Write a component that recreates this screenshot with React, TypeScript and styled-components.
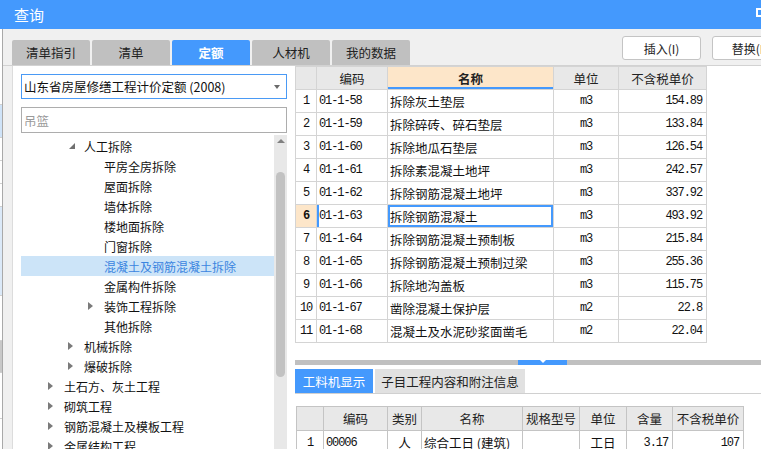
import React, {FC} from 'react';
import styled, {createGlobalStyle} from 'styled-components';

const BLUE = '#4499fd';

const GlobalStyle = createGlobalStyle`
  html, body { margin: 0; padding: 0; }
  body {
    font-family: "Noto Sans CJK SC", "Noto Sans", sans-serif;
    font-size: 12px;
    color: #111;
    background: #f0f0f0;
  }
  #root { width: 761px; height: 449px; overflow: hidden; }
`;

const Window = styled.div`
  width: 761px;
  height: 449px;
  display: flex;
  flex-direction: column;
  overflow: hidden;
`;

const TitleBar = styled.div`
  height: 29px;
  flex-shrink: 0;
  background: ${BLUE};
  color: #fff;
  font-size: 15px;
  display: flex;
  align-items: center;
  justify-content: space-between;
  padding-left: 14px;
`;

const MaxIcon = styled.span`
  width: 8px;
  height: 5px;
  border: 2px solid #fff;
  margin-right: -7px;
  margin-top: -4px;
`;

const Body = styled.div`
  flex: 1;
  display: flex;
  min-height: 0;
`;

const BehindStrip = styled.div`
  width: 2px;
  flex-shrink: 0;
  border-right: 1px solid #a9a9a9;
  display: flex;
  flex-direction: column;
  background: #fff;
`;

const BehindBlock = styled.div<{ $h: number; $c: string }>`
  height: ${({$h}) => $h}px;
  background: ${({$c}) => $c};
  border-bottom: 1px solid #d0d0d0;
`;

const Dialog = styled.div`
  flex: 1;
  display: flex;
  flex-direction: column;
  background: #f0f0f0;
  min-width: 0;
`;

const TopBar = styled.div`
  height: 36px;
  flex-shrink: 0;
  display: flex;
  align-items: flex-start;
  padding-left: 9px;
  overflow: hidden;
`;

const Tabs = styled.div`
  display: flex;
  gap: 2px;
  margin-top: 11px;
  flex-shrink: 0;
`;

const Tab = styled.div<{ $active?: boolean }>`
  width: 78px;
  height: 25px;
  border-radius: 2px 2px 0 0;
  background: ${({$active}) => ($active ? BLUE : '#c0c0c0')};
  color: ${({$active}) => ($active ? '#fff' : '#222')};
  font-weight: ${({$active}) => ($active ? 700 : 400)};
  font-size: 12.5px;
  display: flex;
  align-items: center;
  justify-content: center;
`;

const ButtonGroup = styled.div`
  display: flex;
  gap: 11px;
  margin-top: 7px;
  margin-left: 212px;
  flex-shrink: 0;
`;

const Button = styled.div`
  width: 79px;
  height: 24px;
  box-sizing: border-box;
  background: #fff;
  border: 1px solid #c4c4c4;
  border-radius: 3px;
  display: flex;
  align-items: center;
  justify-content: center;
  font-size: 12px;
  color: #222;
`;

const Content = styled.div`
  flex: 1;
  display: flex;
  min-height: 0;
  border-top: 1px solid #d2d2d2;
  padding-left: 9px;
`;

const LeftPanel = styled.div`
  width: 283px;
  flex-shrink: 0;
  box-sizing: border-box;
  background: #fff;
  border-left: 1px solid #dcdcdc;
  padding: 8px 0 0 8px;
  display: flex;
  flex-direction: column;
`;

const Select = styled.div`
  width: 266px;
  height: 25px;
  box-sizing: border-box;
  border: 1px solid #4a9af5;
  display: flex;
  align-items: center;
  justify-content: space-between;
  padding: 0 6px 0 2px;
  font-size: 12.5px;
`;

const Caret = styled.span`
  border-top: 4px solid #6a6a6a;
  border-left: 3.5px solid transparent;
  border-right: 3.5px solid transparent;
`;

const Search = styled.div`
  width: 266px;
  height: 26px;
  box-sizing: border-box;
  margin-top: 8px;
  border: 1px solid #adadad;
  display: flex;
  align-items: center;
  padding-left: 2px;
  color: #9a9a9a;
  font-size: 12.5px;
`;

const TreeWrap = styled.div`
  flex: 1;
  display: flex;
  margin-top: 2px;
  min-height: 0;
  overflow: hidden;
`;

const TreeList = styled.div`
  width: 253px;
  padding-top: 1px;
`;

const TreeRow = styled.div<{ $level: number; $selected?: boolean }>`
  height: 20px;
  display: flex;
  align-items: center;
  padding-left: ${({$level}) => 27 + $level * 20}px;
  background: ${({$selected}) => ($selected ? '#cce4f8' : 'transparent')};
  color: ${({$selected}) => ($selected ? '#3b85e0' : '#111')};
  white-space: nowrap;
`;

const Toggle = styled.span`
  width: 16px;
  height: 20px;
  display: flex;
  align-items: center;
  flex-shrink: 0;
`;

const Collapsed = styled.span`
  border-left: 5px solid #7a7a7a;
  border-top: 4px solid transparent;
  border-bottom: 4px solid transparent;
`;

const Expanded = styled.span`
  border-bottom: 6px solid #707070;
  border-left: 6px solid transparent;
  margin-left: 1px;
`;

const ScrollTrack = styled.div`
  width: 13px;
  background: #e8e8e8;
  display: flex;
  flex-direction: column;
  align-items: center;
`;

const ScrollArrow = styled.span`
  margin-top: 4px;
  border-bottom: 4px solid #808080;
  border-left: 4px solid transparent;
  border-right: 4px solid transparent;
`;

const Thumb = styled.div`
  width: 9px;
  height: 205px;
  margin-top: 29px;
  border-radius: 5px;
  background: #c2c2c2;
`;

const RightPanel = styled.div`
  flex: 1;
  min-width: 0;
  background: #fff;
  display: flex;
  flex-direction: column;
  overflow: hidden;
`;

const GridArea = styled.div`
  height: 294px;
  flex-shrink: 0;
`;

const Table = styled.table<{ $line: string }>`
  border-collapse: collapse;
  table-layout: fixed;
  td, th {
    border: 1px solid ${({$line}) => $line};
    padding: 0;
    overflow: hidden;
    white-space: nowrap;
  }
`;

const HeadCell = styled.th<{ $current?: boolean }>`
  background: ${({$current}) => ($current ? '#fde6c9' : '#e8e8e8')};
  font-weight: ${({$current}) => ($current ? 700 : 400)};
  font-size: 12.5px;
  color: #222;
  text-align: center;
  box-shadow: ${({$current}) => ($current ? `inset 0 -2px 0 ${BLUE}` : 'none')};
`;

const Cell = styled.td<{
  $align?: 'left' | 'center' | 'right';
  $mono?: boolean;
  $current?: boolean;
  $focus?: boolean;
  $edge?: boolean;
}>`
  text-align: ${({$align}) => $align || 'left'};
  font-family: ${({$mono}) => ($mono ? '"Liberation Mono", monospace' : '"Noto Sans CJK SC", sans-serif')};
  font-size: ${({$mono}) => ($mono ? '12px' : '12.5px')};
  letter-spacing: ${({$mono}) => ($mono ? '-1.1px' : '0')};
  color: #111;
  padding: ${({$align}) => ($align === 'right' ? '0 4px 0 0' : $align === 'center' ? '0' : '0 0 0 2px')} !important;
  background: ${({$current}) => ($current ? '#fde6c9' : '#fff')};
  font-weight: ${({$current}) => ($current ? 700 : 400)};
  box-shadow: ${({$focus, $edge}) =>
    $focus ? `inset 0 0 0 2px ${BLUE}` : $edge ? `inset 2px 0 0 ${BLUE}` : 'none'};
`;

const Splitter = styled.div`
  height: 5px;
  flex-shrink: 0;
  background: #c0c0c0;
`;

const SplitHandle = styled.div`
  width: 49px;
  height: 5px;
  margin-left: 223px;
  background: ${BLUE};
  display: flex;
  justify-content: center;
`;

const HandleArrow = styled.span`
  border-top: 3px solid #fff;
  border-left: 3px solid transparent;
  border-right: 3px solid transparent;
  height: 0;
`;

const SubTabs = styled.div`
  height: 26px;
  flex-shrink: 0;
  padding-top: 2px;
  display: flex;
  gap: 2px;
  border-bottom: 1px solid #d0d0d0;
`;

const SubTab = styled.div<{ $active?: boolean; $w: number }>`
  width: ${({$w}) => $w}px;
  height: 24px;
  background: ${({$active}) => ($active ? BLUE : '#e1e1e1')};
  color: ${({$active}) => ($active ? '#fff' : '#222')};
  font-size: 12.5px;
  display: flex;
  align-items: center;
  justify-content: center;
  align-self: flex-end;
`;

const BottomGrid = styled.div`
  margin-top: 12px;
  margin-left: 1px;
`;

type Row = { code: string; name: string; unit: string; price: string };

const rows: Row[] = [
  {code: '01-1-58', name: '拆除灰土垫层', unit: 'm3', price: '154.89'},
  {code: '01-1-59', name: '拆除碎砖、碎石垫层', unit: 'm3', price: '133.84'},
  {code: '01-1-60', name: '拆除地瓜石垫层', unit: 'm3', price: '126.54'},
  {code: '01-1-61', name: '拆除素混凝土地坪', unit: 'm3', price: '242.57'},
  {code: '01-1-62', name: '拆除钢筋混凝土地坪', unit: 'm3', price: '337.92'},
  {code: '01-1-63', name: '拆除钢筋混凝土', unit: 'm3', price: '493.92'},
  {code: '01-1-64', name: '拆除钢筋混凝土预制板', unit: 'm3', price: '215.84'},
  {code: '01-1-65', name: '拆除钢筋混凝土预制过梁', unit: 'm3', price: '255.36'},
  {code: '01-1-66', name: '拆除地沟盖板', unit: 'm3', price: '115.75'},
  {code: '01-1-67', name: '凿除混凝土保护层', unit: 'm2', price: '22.8'},
  {code: '01-1-68', name: '混凝土及水泥砂浆面凿毛', unit: 'm2', price: '22.04'},
];

type Node = { label: string; level: number; toggle?: 'open' | 'closed'; selected?: boolean };

const tree: Node[] = [
  {label: '人工拆除', level: 1, toggle: 'open'},
  {label: '平房全房拆除', level: 2},
  {label: '屋面拆除', level: 2},
  {label: '墙体拆除', level: 2},
  {label: '楼地面拆除', level: 2},
  {label: '门窗拆除', level: 2},
  {label: '混凝土及钢筋混凝土拆除', level: 2, selected: true},
  {label: '金属构件拆除', level: 2},
  {label: '装饰工程拆除', level: 2, toggle: 'closed'},
  {label: '其他拆除', level: 2},
  {label: '机械拆除', level: 1, toggle: 'closed'},
  {label: '爆破拆除', level: 1, toggle: 'closed'},
  {label: '土石方、灰土工程', level: 0, toggle: 'closed'},
  {label: '砌筑工程', level: 0, toggle: 'closed'},
  {label: '钢筋混凝土及模板工程', level: 0, toggle: 'closed'},
  {label: '金属结构工程', level: 0, toggle: 'closed'},
];

const behind = [
  {h: 75, c: '#fff'},
  {h: 32, c: '#cfe3f8'},
  {h: 22, c: '#fff'},
  {h: 22, c: '#fff'},
  {h: 22, c: '#fff'},
  {h: 88, c: '#dbe9f8'},
  {h: 44, c: '#fff'},
  {h: 31, c: '#c8c8c8'},
  {h: 45, c: '#fff'},
];

const App: FC = () => {
  const current = 5;
  return (
    <Window>
      <GlobalStyle />
      <TitleBar>
        <span>查询</span>
        <MaxIcon />
      </TitleBar>
      <Body>
        <BehindStrip>
          {behind.map((b, i) => (
            <BehindBlock key={i} $h={b.h} $c={b.c} />
          ))}
        </BehindStrip>
        <Dialog>
          <TopBar>
            <Tabs>
              <Tab>清单指引</Tab>
              <Tab>清单</Tab>
              <Tab $active>定额</Tab>
              <Tab>人材机</Tab>
              <Tab>我的数据</Tab>
            </Tabs>
            <ButtonGroup>
              <Button>插入(I)</Button>
              <Button>替换(R)</Button>
            </ButtonGroup>
          </TopBar>
          <Content>
            <LeftPanel>
              <Select>
                <span>山东省房屋修缮工程计价定额 (2008)</span>
                <Caret />
              </Select>
              <Search>吊篮</Search>
              <TreeWrap>
                <TreeList>
                  {tree.map((n) => (
                    <TreeRow key={n.label} $level={n.level} $selected={n.selected}>
                      <Toggle>
                        {n.toggle === 'closed' && <Collapsed />}
                        {n.toggle === 'open' && <Expanded />}
                      </Toggle>
                      {n.label}
                    </TreeRow>
                  ))}
                </TreeList>
                <ScrollTrack>
                  <ScrollArrow />
                  <Thumb />
                </ScrollTrack>
              </TreeWrap>
            </LeftPanel>
            <RightPanel>
              <GridArea>
                <Table $line="#d4d4d4">
                  <colgroup>
                    <col style={{width: 21}} />
                    <col style={{width: 71}} />
                    <col style={{width: 166}} />
                    <col style={{width: 65}} />
                    <col style={{width: 88}} />
                  </colgroup>
                  <thead>
                    <tr style={{height: 23}}>
                      <HeadCell />
                      <HeadCell>编码</HeadCell>
                      <HeadCell $current>名称</HeadCell>
                      <HeadCell>单位</HeadCell>
                      <HeadCell>不含税单价</HeadCell>
                    </tr>
                  </thead>
                  <tbody>
                    {rows.map((r, i) => (
                      <tr key={r.code} style={{height: 23}}>
                        <Cell $align="center" $mono $current={i === current}>{i + 1}</Cell>
                        <Cell $mono $edge={i === current}>{r.code}</Cell>
                        <Cell $focus={i === current}>{r.name}</Cell>
                        <Cell $align="center" $mono>{r.unit}</Cell>
                        <Cell $align="right" $mono>{r.price}</Cell>
                      </tr>
                    ))}
                  </tbody>
                </Table>
              </GridArea>
              <Splitter>
                <SplitHandle>
                  <HandleArrow />
                </SplitHandle>
              </Splitter>
              <SubTabs>
                <SubTab $active $w={78}>工料机显示</SubTab>
                <SubTab $w={150}>子目工程内容和附注信息</SubTab>
              </SubTabs>
              <BottomGrid>
                <Table $line="#c4c4c4">
                  <colgroup>
                    <col style={{width: 27}} />
                    <col style={{width: 64}} />
                    <col style={{width: 34}} />
                    <col style={{width: 101}} />
                    <col style={{width: 57}} />
                    <col style={{width: 47}} />
                    <col style={{width: 46}} />
                    <col style={{width: 71}} />
                  </colgroup>
                  <thead>
                    <tr style={{height: 24}}>
                      <HeadCell />
                      <HeadCell>编码</HeadCell>
                      <HeadCell>类别</HeadCell>
                      <HeadCell>名称</HeadCell>
                      <HeadCell>规格型号</HeadCell>
                      <HeadCell>单位</HeadCell>
                      <HeadCell>含量</HeadCell>
                      <HeadCell>不含税单价</HeadCell>
                    </tr>
                  </thead>
                  <tbody>
                    <tr style={{height: 24}}>
                      <Cell $align="center" $mono>1</Cell>
                      <Cell $mono>00006</Cell>
                      <Cell $align="center">人</Cell>
                      <Cell>综合工日 (建筑)</Cell>
                      <Cell />
                      <Cell $align="center">工日</Cell>
                      <Cell $align="right" $mono>3.17</Cell>
                      <Cell $align="right" $mono>107</Cell>
                    </tr>
                  </tbody>
                </Table>
              </BottomGrid>
            </RightPanel>
          </Content>
        </Dialog>
      </Body>
    </Window>
  );
};

export default App;
